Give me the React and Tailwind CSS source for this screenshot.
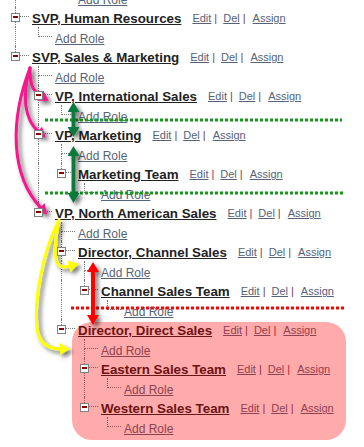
import React from 'react';

const LINE = 'border-r border-dotted border-[#7a7a7a]';

const rows = [
  { level: 2, guides: [1, 0], up: 1, down: 0 },
  { level: 0, guides: [], up: 1, down: 1, title: 'SVP, Human Resources' },
  { level: 1, guides: [1], up: 1, down: 0 },
  { level: 0, guides: [], up: 1, down: 0, title: 'SVP, Sales & Marketing' },
  { level: 1, guides: [0], up: 1, down: 1 },
  { level: 1, guides: [0], up: 1, down: 1, title: 'VP, International Sales' },
  { level: 2, guides: [0, 1], up: 1, down: 0 },
  { level: 1, guides: [0], up: 1, down: 1, title: 'VP, Marketing' },
  { level: 2, guides: [0, 1], up: 1, down: 1 },
  { level: 2, guides: [0, 1], up: 1, down: 0, title: 'Marketing Team' },
  { level: 3, guides: [0, 1, 0], up: 1, down: 0 },
  { level: 1, guides: [0], up: 1, down: 0, title: 'VP, North American Sales' },
  { level: 2, guides: [0, 0], up: 1, down: 1 },
  { level: 2, guides: [0, 0], up: 1, down: 1, title: 'Director, Channel Sales' },
  { level: 3, guides: [0, 0, 1], up: 1, down: 1 },
  { level: 3, guides: [0, 0, 1], up: 1, down: 0, title: 'Channel Sales Team' },
  { level: 4, guides: [0, 0, 1, 0], up: 1, down: 0 },
  { level: 2, guides: [0, 0], up: 1, down: 0, title: 'Director, Direct Sales' },
  { level: 3, guides: [0, 0, 0], up: 1, down: 1 },
  { level: 3, guides: [0, 0, 0], up: 1, down: 1, title: 'Eastern Sales Team' },
  { level: 4, guides: [0, 0, 0, 1], up: 1, down: 0 },
  { level: 3, guides: [0, 0, 0], up: 1, down: 0, title: 'Western Sales Team' },
  { level: 4, guides: [0, 0, 0, 0], up: 1, down: 0 },
];

const App = () => (
  <div className="relative flex h-[447px] w-[364px] flex-col overflow-hidden bg-white font-['Liberation_Sans',Arial,sans-serif]">
    <div className="mt-[-12.25px] flex flex-col pl-[4px]">
      {rows.map((row, i) => (
        <RoleRow key={i} {...row} />
      ))}
    </div>
    <Annotations />
  </div>
);

const RoleRow = ({ guides, up, down, title }) => (
  <div className="flex h-[19.5px] shrink-0 items-stretch">
    {guides.map((g, i) => (
      <div key={i} className="w-[23px] shrink-0">
        {g ? <div className={`h-full w-[12px] ${LINE}`} /> : null}
      </div>
    ))}
    <div className="grid w-[25px] shrink-0 grid-cols-[12px_13px] grid-rows-2">
      <div className={`col-start-1 row-start-1 ${up ? LINE : ''}`} />
      <div className={`col-start-1 row-start-2 ${down ? LINE : ''}`} />
      <div className="col-start-2 row-start-1 border-b border-dotted border-[#7a7a7a]" />
      {title && (
        <div className="z-10 col-span-2 col-start-1 row-span-2 row-start-1 ml-[7px] flex h-[9px] w-[9px] items-center justify-center self-center border border-[#808080] bg-white">
          <div className="h-[1.5px] w-[5px] bg-[#8b0000]" />
        </div>
      )}
    </div>
    <div className="ml-[3px] flex items-center whitespace-nowrap">
      {title ? (
        <>
          <a className="mt-[3px] text-[13.33px] font-bold text-[#222] underline">{title}</a>
          <Actions />
        </>
      ) : (
        <a className="mt-[4px] text-[12px] text-[#556478] underline">Add Role</a>
      )}
    </div>
  </div>
);

const Actions = () => (
  <div className="mt-[3px] ml-[11px] flex items-center text-[11px] text-[#55627a]">
    <a className="underline">Edit</a>
    <span className="ml-[3px] text-[#6b3d5e]">|</span>
    <a className="ml-[6px] underline">Del</a>
    <span className="ml-[3px] text-[#6b3d5e]">|</span>
    <a className="ml-[7px] underline">Assign</a>
  </div>
);

const Head = ({ id, color }) => (
  <marker
    id={id}
    viewBox="0 0 10 12"
    markerWidth="11"
    markerHeight="12"
    refX="1"
    refY="6"
    markerUnits="userSpaceOnUse"
    orient="auto-start-reverse"
  >
    <path d="M0,0 L10,6 L0,12 z" fill={color} />
  </marker>
);

const Annotations = () => (
  <svg
    className="pointer-events-none absolute inset-0"
    width="364"
    height="447"
    viewBox="0 0 364 447"
  >
    <defs>
      <filter id="shadow" x="-50%" y="-50%" width="200%" height="200%">
        <feDropShadow dx="3" dy="3" stdDeviation="2.2" floodColor="#000" floodOpacity="0.55" />
      </filter>
      <Head id="pink" color="#f7148b" />
      <Head id="green" color="#0e7a3e" />
      <Head id="red" color="#ff0000" />
      <Head id="yellow" color="#ffff00" />
    </defs>

    {/* highlighted subtree */}
    <rect x="72" y="322" width="274" height="118" rx="20" fill="rgba(255,0,0,0.33)" />

    {/* dotted separators */}
    <line x1="45" y1="120" x2="342" y2="120" stroke="#139a1a" strokeWidth="3" strokeDasharray="3 2" />
    <line x1="45" y1="193" x2="345" y2="193" stroke="#139a1a" strokeWidth="3" strokeDasharray="3 2" />
    <line x1="71" y1="308" x2="345" y2="308" stroke="#ff0000" strokeWidth="3" strokeDasharray="3 2" />

    <g filter="url(#shadow)" fill="none" strokeLinecap="round">
      {/* pink */}
      <path d="M30,68 C30,82 31,90 41,96" stroke="#f7148b" strokeWidth="3" markerEnd="url(#pink)" />
      <path d="M30,68 C22,95 24,120 39,132" stroke="#f7148b" strokeWidth="3" markerEnd="url(#pink)" />
      <path d="M30,68 C10,120 10,175 41,208" stroke="#f7148b" strokeWidth="3" markerEnd="url(#pink)" />

      {/* green */}
      <path d="M73.5,111 L73.5,128" stroke="#0e7a3e" strokeWidth="4" strokeLinecap="butt" markerStart="url(#green)" markerEnd="url(#green)" />
      <path d="M73.5,155 L73.5,194" stroke="#0e7a3e" strokeWidth="4" strokeLinecap="butt" markerStart="url(#green)" markerEnd="url(#green)" />

      {/* red */}
      <path d="M93,271 L93,316" stroke="#ff0000" strokeWidth="4" strokeLinecap="butt" markerStart="url(#red)" markerEnd="url(#red)" />

      {/* yellow */}
      <path d="M59,220 C55,240 53,262 60,266 C63,268 66,267 70,266" stroke="#ffff00" strokeWidth="3" markerEnd="url(#yellow)" />
      <path d="M58,222 C42,255 34,300 37,328 C39,345 50,349 61,349" stroke="#ffff00" strokeWidth="3" markerEnd="url(#yellow)" />
    </g>
  </svg>
);

export default App;
